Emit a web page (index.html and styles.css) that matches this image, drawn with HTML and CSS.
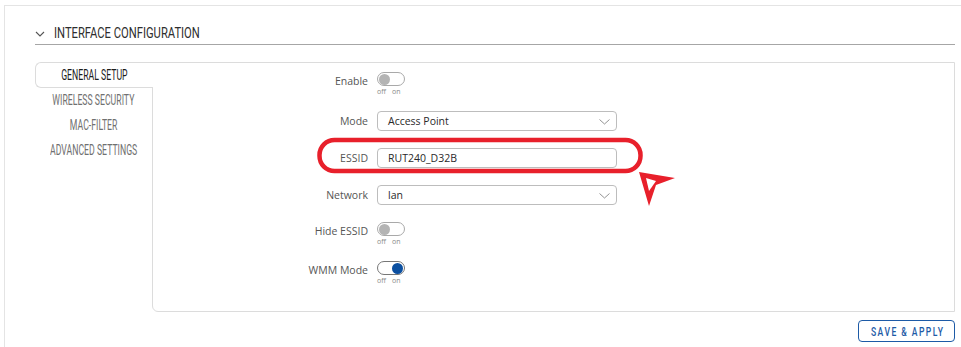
FILE: index.html
```html
<!DOCTYPE html>
<html lang="en">
<head>
  <meta charset="UTF-8">
  <meta name="viewport" content="width=device-width, initial-scale=1.0">
  <title>Wireless - Interface Configuration</title>
  <link rel="stylesheet" href="styles.css">
</head>
<body>
  <div class="card">
    <div class="section-header">
      <svg class="chevron" width="10" height="6" viewBox="0 0 10 6"><path d="M1 1 L5 5 L9 1" fill="none" stroke="#555" stroke-width="1.1"/></svg>
      <h2><span class="narrow">INTERFACE CONFIGURATION</span></h2>
    </div>

    <div class="tabs-wrap">
      <ul class="tab-list">
        <li class="tab active"><span class="narrow">GENERAL SETUP</span></li>
        <li class="tab"><span class="narrow">WIRELESS SECURITY</span></li>
        <li class="tab"><span class="narrow">MAC-FILTER</span></li>
        <li class="tab"><span class="narrow">ADVANCED SETTINGS</span></li>
      </ul>

      <div class="tab-panel">
        <div class="form-row toggle-row">
          <label>Enable</label>
          <div class="switch">
            <span class="track"><span class="knob"></span></span>
            <span class="switch-text"><span>off</span><span>on</span></span>
          </div>
        </div>

        <div class="form-row">
          <label>Mode</label>
          <div class="select">Access Point
            <svg class="select-arrow" width="11" height="6" viewBox="0 0 11 6"><path d="M0.5 0.5 L5.5 5 L10.5 0.5" fill="none" stroke="#888" stroke-width="0.9"/></svg>
          </div>
        </div>

        <div class="form-row highlight-row">
          <label>ESSID</label>
          <div class="input">RUT240_D32B</div>
          <svg class="highlight" width="370" height="72" viewBox="0 0 370 72">
            <rect x="2.5" y="3" width="321" height="31" rx="15" fill="none" stroke="#e8202b" stroke-width="4.5"/>
            <path d="M322 35 L358 41 L339 48 L332 69 Z" fill="#e8202b"/>
            <path d="M329 41 L339 44 L332 54 Z" fill="#fff"/>
          </svg>
        </div>

        <div class="form-row">
          <label>Network</label>
          <div class="select">lan
            <svg class="select-arrow" width="11" height="6" viewBox="0 0 11 6"><path d="M0.5 0.5 L5.5 5 L10.5 0.5" fill="none" stroke="#888" stroke-width="0.9"/></svg>
          </div>
        </div>

        <div class="form-row toggle-row">
          <label>Hide ESSID</label>
          <div class="switch">
            <span class="track"><span class="knob"></span></span>
            <span class="switch-text"><span>off</span><span>on</span></span>
          </div>
        </div>

        <div class="form-row toggle-row">
          <label>WMM Mode</label>
          <div class="switch on">
            <span class="track"><span class="knob"></span></span>
            <span class="switch-text"><span>off</span><span>on</span></span>
          </div>
        </div>
      </div>
    </div>

    <div class="actions">
      <button class="btn-save"><span class="narrow">SAVE &amp; APPLY</span></button>
    </div>
  </div>
</body>
</html>
```

FILE: styles.css
```css
/* Base */
* {
  margin: 0;
  padding: 0;
  box-sizing: border-box;
}

body {
  background-color: #fff;
  font-family: 'Open Sans', 'Noto Sans', sans-serif;
  color: #444;
  height: 347px;
  overflow: hidden;
}

/* condensed heading text (no narrow face installed, so squeeze it) */
.narrow {
  display: inline-block;
  flex-shrink: 0;
  white-space: nowrap;
  font-family: 'Roboto', 'Liberation Sans', sans-serif;
  font-weight: 500;
}

/* Outer card */
.card {
  margin: 5px 0 0 4px;
  height: 342px;
  border-top: 1px solid #e4e4e4;
  border-left: 1px solid #e4e4e4;
  padding: 0 6px 0 30px;
}

.section-header {
  display: flex;
  align-items: center;
  height: 39px;
  padding-top: 14px;
  border-bottom: 1px solid #a6a6a6;
}

.chevron {
  margin: 4px 9px 0 0;
}

.section-header h2 {
  font-weight: normal;
  font-size: 14px;
  color: #2e2e2e;
}

.section-header h2 .narrow {
  font-weight: 400;
  transform: scaleX(0.8);
  transform-origin: left center;
}

/* Tabs */
.tabs-wrap {
  display: flex;
  margin-top: 17px;
}

.tab-list {
  list-style: none;
  width: 117px;
  flex-shrink: 0;
}

.tab {
  display: flex;
  align-items: center;
  justify-content: center;
  font-size: 14.5px;
  color: #707070;
  height: 25px;
}

.tab .narrow {
  font-weight: 400;
  transform: scaleX(0.6);
  transform-origin: center;
}

.tab.active {
  position: relative;
  z-index: 1;
  height: 26px;
  margin-right: -1px;
  color: #1c1c1c;
  background: #fff;
  border: 1px solid #dcdcdc;
  border-right: none;
  border-radius: 6px 0 0 6px;
}

.tab-panel {
  position: relative;
  flex: 1;
  height: 250px;
  border: 1px solid #dcdcdc;
  border-radius: 0 0 0 6px;
  padding-top: 9px;
  display: flex;
  flex-direction: column;
  gap: 17px;
}

/* Form rows */
.form-row {
  position: relative;
  display: flex;
  align-items: center;
  gap: 9px;
  height: 20px;
}

.form-row label {
  width: 215px;
  text-align: right;
  font-size: 10.5px;
  color: #555;
}

.toggle-row {
  align-items: flex-start;
  height: 22px;
}

.toggle-row label {
  padding-top: 2px;
}

.select,
.input {
  position: relative;
  width: 240px;
  height: 20px;
  border: 1px solid #bdbdbd;
  border-radius: 4px;
  padding-left: 10px;
  font-size: 10.5px;
  line-height: 18px;
  color: #2a2a2a;
}

.select-arrow {
  position: absolute;
  right: 6px;
  top: 7px;
}

/* Switch */
.switch {
  display: flex;
  flex-direction: column;
  width: 28px;
}

.track {
  display: flex;
  align-items: center;
  width: 28px;
  height: 14px;
  border: 1px solid #a9a9a9;
  border-radius: 7px;
  padding: 0 1px;
}

.knob {
  width: 11px;
  height: 11px;
  border-radius: 50%;
  background: #b4b4b4;
}

.switch.on .track {
  justify-content: flex-end;
  border-color: #777;
}

.switch.on .knob {
  background: #0b4fa0;
}

.switch-text {
  display: flex;
  gap: 6px;
  font-size: 7px;
  color: #8a8a8a;
  line-height: 9px;
  padding-top: 1px;
}

/* Highlight annotation */
.highlight {
  position: absolute;
  left: 164px;
  top: -11px;
  overflow: visible;
}

/* Footer */
.actions {
  display: flex;
  justify-content: flex-end;
  margin-top: 8px;
}

.btn-save {
  display: flex;
  align-items: center;
  justify-content: center;
  width: 97px;
  height: 22px;
  padding-left: 2px;
  background: #fff;
  border: 1.5px solid #1d5aa6;
  border-radius: 4px;
  color: #1d5aa6;
  font-size: 13px;
  cursor: pointer;
}

.btn-save .narrow {
  letter-spacing: 2.2px;
  transform: scaleX(0.66);
  transform-origin: center;
}
```
